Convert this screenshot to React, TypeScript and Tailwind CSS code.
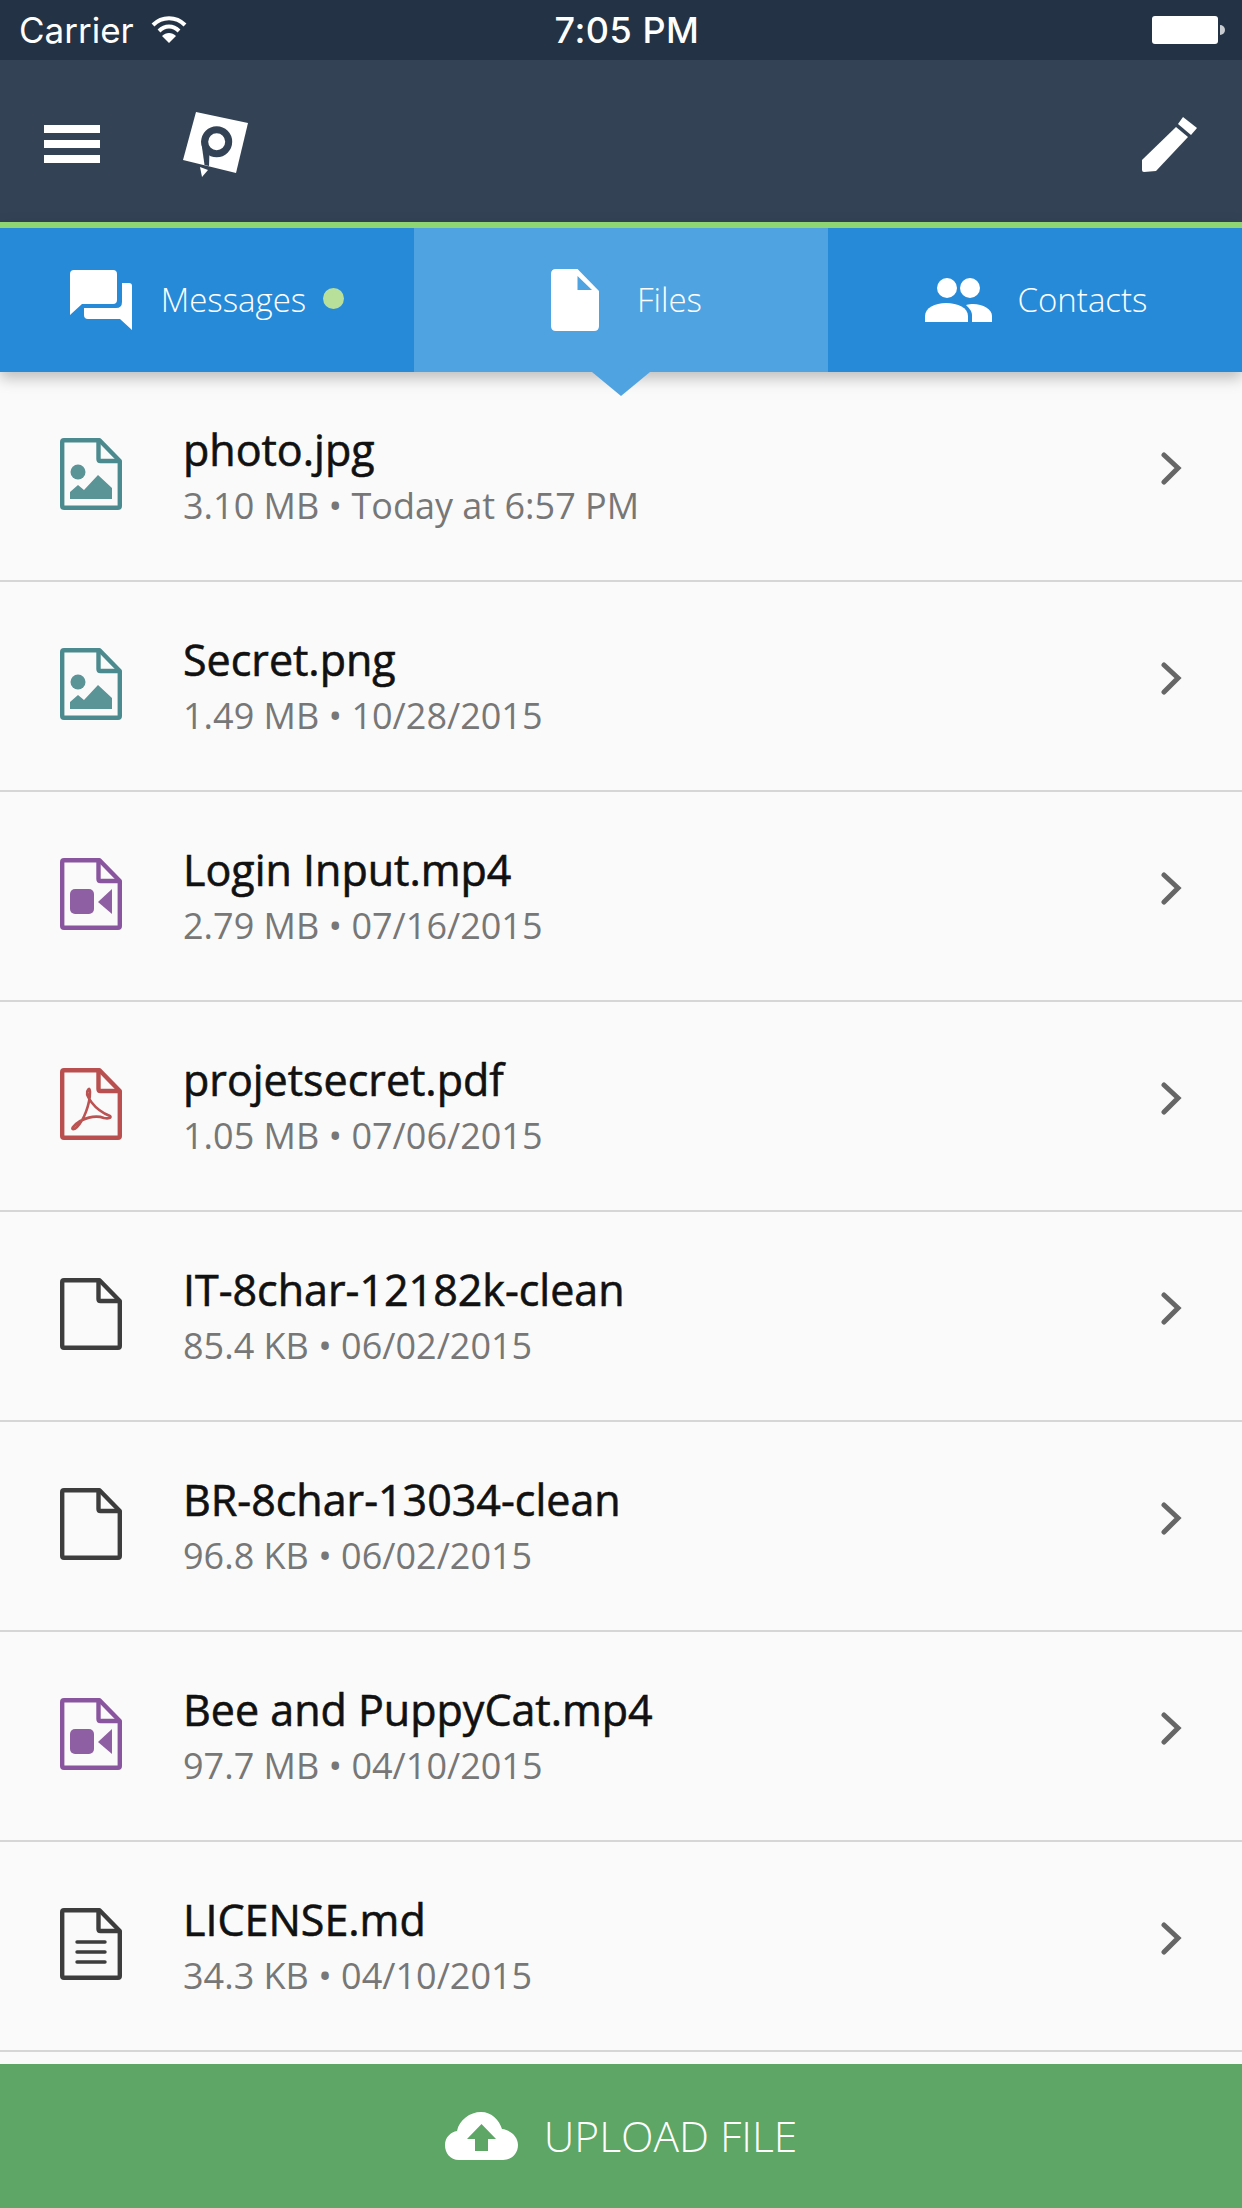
import React from "react";

const OPEN = "font-['Open_Sans','Noto_Sans',sans-serif]";

function FileIcon({ color, children }: { color: string; children?: React.ReactNode }) {
  return (
    <svg width="62" height="72" viewBox="0 0 62 72" fill="none" className="mb-[4px] shrink-0">
      <path d="M2.2 4 Q2.2 2.2 4 2.2 H39.5 L59.8 23 V68 Q59.8 69.8 58 69.8 H4 Q2.2 69.8 2.2 68 Z" stroke={color} strokeWidth="4.4" strokeLinejoin="round" />
      <path d="M38.5 2.2 V21 Q38.5 23 40.5 23 H59.8" stroke={color} strokeWidth="4.4" />
      {children}
    </svg>
  );
}

const ImageGlyph = () => (
  <>
    <circle cx="18" cy="34" r="7.5" fill="#5b9497" />
    <path d="M10 61 V54 L18 47 L24 52 L38 37 L52 50 V61 Z" fill="#5b9497" />
  </>
);
const VideoGlyph = () => (
  <>
    <rect x="10" y="31" width="24" height="25" rx="5" fill="#8f5fa3" />
    <path d="M52 31 V56 L38 44 Z" fill="#8f5fa3" />
  </>
);
const PdfGlyph = () => (
  <g stroke="#bb5353" strokeWidth="2.6" fill="none" strokeLinecap="round">
    <path d="M28 22 C24 26 34 42 50 48 C52 50 48 51 44 50 C36 47 22 49 13 59 C11 62 14 62 17 59 C24 52 30 36 30 24 C30 21 29 20 28 22 Z" />
  </g>
);
const TextGlyph = () => (
  <g stroke="#3d3d3d" strokeWidth="3.4" strokeLinecap="round">
    <path d="M17 34 H45" />
    <path d="M17 44 H45" />
    <path d="M17 54 H45" />
  </g>
);

type Kind = "image" | "video" | "pdf" | "blank" | "text";
const kindColor: Record<Kind, string> = {
  image: "#4b8a8e",
  video: "#8a559f",
  pdf: "#b94f4f",
  blank: "#3d3d3d",
  text: "#3d3d3d",
};

const files: { name: string; meta: string; kind: Kind }[] = [
  { name: "photo.jpg", meta: "3.10 MB • Today at 6:57 PM", kind: "image" },
  { name: "Secret.png", meta: "1.49 MB • 10/28/2015", kind: "image" },
  { name: "Login Input.mp4", meta: "2.79 MB • 07/16/2015", kind: "video" },
  { name: "projetsecret.pdf", meta: "1.05 MB • 07/06/2015", kind: "pdf" },
  { name: "IT-8char-12182k-clean", meta: "85.4 KB • 06/02/2015", kind: "blank" },
  { name: "BR-8char-13034-clean", meta: "96.8 KB • 06/02/2015", kind: "blank" },
  { name: "Bee and PuppyCat.mp4", meta: "97.7 MB • 04/10/2015", kind: "video" },
  { name: "LICENSE.md", meta: "34.3 KB • 04/10/2015", kind: "text" },
];

function FileRow({ name, meta, kind }: { name: string; meta: string; kind: Kind }) {
  return (
    <div className="flex h-[210px] shrink-0 items-center border-b-2 border-[#d6d6d6] pl-[60px] pr-[60px]">
      <FileIcon color={kindColor[kind]}>
        {kind === "image" && <ImageGlyph />}
        {kind === "video" && <VideoGlyph />}
        {kind === "pdf" && <PdfGlyph />}
        {kind === "text" && <TextGlyph />}
      </FileIcon>
      <div className="ml-[61px] flex flex-1 flex-col">
        <div className="text-[43px] leading-[58px] text-[#111111] [-webkit-text-stroke:0.6px_#111111]">{name}</div>
        <div className="mt-[1px] text-[36px] leading-[52px] text-[#777777]">{meta}</div>
      </div>
      <svg className="mb-[16px]" width="22" height="34" viewBox="0 0 22 34" fill="none">
        <path d="M4 4 L18 17 L4 31" stroke="#666" strokeWidth="5" strokeLinecap="round" />
      </svg>
    </div>
  );
}

function Tab({ label, active, icon, dot }: { label: string; active?: boolean; icon: React.ReactNode; dot?: boolean }) {
  return (
    <div className={`relative flex items-center justify-center ${active ? "bg-[#50a3e1]" : "bg-[#268ad9]"}`}>
      {icon}
      <span className="text-[33px] font-light text-white">{label}</span>
      {dot && <span className="ml-[17px] mb-[4px] h-[21px] w-[21px] rounded-full bg-[#b8e09a]" />}
      {active && (
        <span className="absolute top-full left-[178px] h-[24px] w-[58px] bg-[#50a3e1] [clip-path:polygon(0_0,100%_0,50%_100%)]" />
      )}
    </div>
  );
}

export default function App() {
  return (
    <div className={`flex h-[2208px] w-[1242px] flex-col overflow-hidden bg-[#fafafa] ${OPEN}`}>
      <div className="flex h-[60px] shrink-0 items-center bg-[#233345] pl-[19px] pr-[17px] text-white font-['Inter',sans-serif]">
        <div className="flex flex-1 items-center">
          <span className="text-[35px]">Carrier</span>
          <svg className="ml-[17px] mb-[3px]" width="36" height="28" viewBox="0 0 36 28" fill="none">
            <path d="M2 10 C11 1 25 1 34 10" stroke="white" strokeWidth="4" />
            <path d="M8 16 C14 10 22 10 28 16" stroke="white" strokeWidth="4" />
            <path d="M18 28 L11 21 C15 17 21 17 25 21 Z" fill="white" />
          </svg>
        </div>
        <span className="ml-[10px] text-[36px] font-medium tracking-[0.5px]">7:05 PM</span>
        <div className="flex flex-1 items-center justify-end">
          <div className="h-[28px] w-[66px] rounded-[3px] bg-white" />
          <div className="ml-[2px] h-[10px] w-[5px] rounded-r-full bg-[#c9cdd2]" />
        </div>
      </div>

      <div className="flex h-[162px] shrink-0 items-center bg-[#334355] pl-[44px] pr-[45px] pt-[6px]">
        <div className="flex w-[56px] flex-col gap-[7.5px]">
          <div className="h-[7.5px] bg-white" />
          <div className="h-[7.5px] bg-white" />
          <div className="h-[7.5px] bg-white" />
        </div>
        <svg className="ml-[83px]" width="65" height="65" viewBox="0 0 65 65">
          <path d="M13 0 L65 11 L53 61 L0 48 Z" fill="white" />
          <path d="M17 55 L25 58 L19 65 Z" fill="white" />
          <circle cx="33.7" cy="29.7" r="12" fill="none" stroke="#334355" strokeWidth="7" />
          <path d="M18 28 L21.5 53 L26 54 L26.5 38 Z" fill="#334355" />
        </svg>
        <div className="flex-1" />
        <svg width="55" height="55" viewBox="0 0 55 55" fill="white">
          <path d="M41 0 L55 11 L49 18 L36 7 Z" />
          <path d="M34 10 L46 20 L14 54 L2 55 Q0 55 0 53 L0 43 Z" />
        </svg>
      </div>

      <div className="relative z-10 grid h-[150px] shrink-0 grid-cols-3 border-t-[6px] border-[#8fd573] shadow-[0_6px_14px_rgba(0,0,0,0.25)]">
        <Tab
          label="Messages"
          dot
          icon={
            <svg className="mr-[29px]" width="62" height="60" viewBox="0 0 62 60" fill="white">
              <path d="M4 0 H43 Q47 0 47 4 V30 Q47 34 43 34 H12 L0 45 V4 Q0 0 4 0 Z" />
              <path d="M52 13 H59 Q62 13 62 16 V60 L50 49 H18 Q14 49 14 45 V38 H46 Q52 38 52 32 Z" />
            </svg>
          }
        />
        <Tab
          label="Files"
          active
          icon={
            <svg className="ml-[11px] mr-[38px]" width="48" height="62" viewBox="0 0 48 62" fill="white">
              <path d="M5 0 H26.5 L48 22 V57 Q48 62 43 62 H5 Q0 62 0 57 V5 Q0 0 5 0 Z" />
              <path d="M26.5 7 V21 H41 Z" fill="#50a3e1" />
            </svg>
          }
        />
        <Tab
          label="Contacts"
          icon={
            <svg className="mr-[26px] ml-[2px]" width="67" height="44" viewBox="0 0 67 44" fill="white">
              <circle cx="22" cy="10" r="10" />
              <circle cx="45" cy="10" r="10" />
              <path d="M0 44 V38 C0 30 10 25 21 25 C33 25 43 30 43 38 V44 Z" />
              <path d="M47 44 V37 C47 33 44 30 41 27 C44 26 46 26 48 26 C58 26 67 31 67 38 V44 Z" />
            </svg>
          }
        />
      </div>

      <div className="flex flex-col">
        {files.map((f) => (
          <FileRow key={f.name} {...f} />
        ))}
      </div>

      <div className="mt-[12px] flex h-[144px] shrink-0 items-center justify-center bg-[#5da665] text-white">
        <svg className="mr-[26px]" width="73" height="48" viewBox="0 0 73 48">
          <path d="M14 48 C5 48 0 41 0 33 C0 25 6 20 12 19 C14 8 25 0 36 0 C47 0 54 8 57 17 C66 18 73 25 73 33 C73 42 66 48 58 48 Z" fill="white" />
          <path d="M36.5 12 L51 27 H43 V39 H30 V27 H22 Z" fill="#5da665" />
        </svg>
        <span className="text-[42.5px] font-light">UPLOAD FILE</span>
      </div>
    </div>
  );
}
